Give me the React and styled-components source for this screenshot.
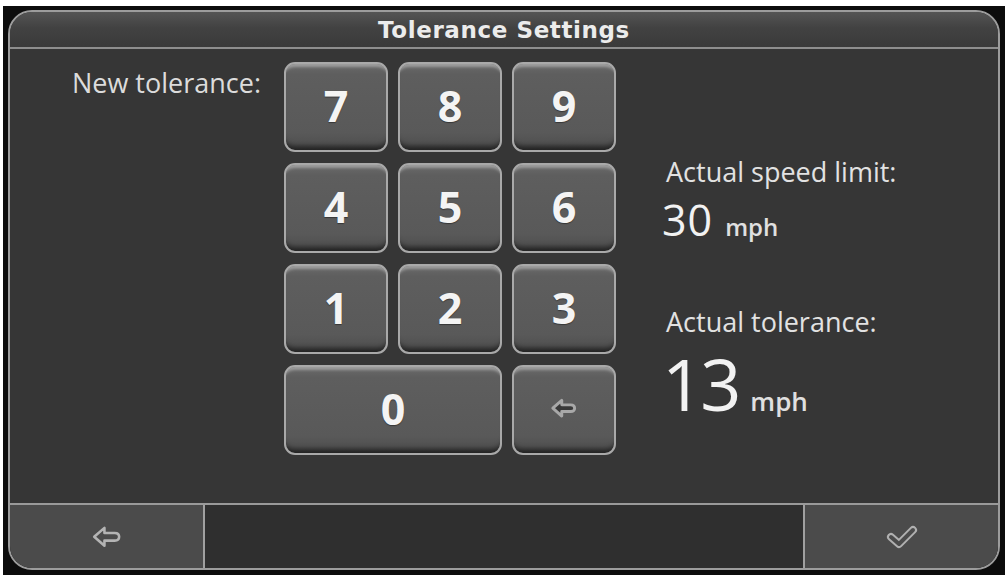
import React from 'react'
import styled, { createGlobalStyle } from 'styled-components'

const GlobalStyle = createGlobalStyle`
  body {
    margin: 0;
    background: #ffffff;
    font-family: 'Open Sans', 'DejaVu Sans', sans-serif;
  }
`

const Frame = styled.div`
  margin: 6px 0 0 3px;
  width: 1002px;
  height: 569px;
  box-sizing: border-box;
  padding: 4px 5px 5px 5px;
  background: #0c0c0c;
`
const Panel = styled.div`
  height: 100%;
  box-sizing: border-box;
  border: 2px solid #9c9c9c;
  border-radius: 24px;
  overflow: hidden;
  display: flex;
  flex-direction: column;
  background: #363636;
`
const TitleBar = styled.header`
  height: 35px;
  flex: none;
  display: flex;
  align-items: center;
  justify-content: center;
  background: linear-gradient(#545454, #424242 45%, #3a3a3a);
  border-bottom: 2px solid #8e8e8e;
  color: #ececec;
  font-family: 'DejaVu Sans', Verdana, sans-serif;
  font-weight: bold;
  font-size: 23px;
  letter-spacing: 0.6px;
`
const Body = styled.main`
  flex: 1;
  display: flex;
  align-items: flex-start;
  padding-top: 13px;
`
const LabelCol = styled.div`
  width: 251px;
  text-align: right;
  padding-top: 3px;
  line-height: 36px;
  color: #dcdcdc;
  font-size: 27px;
  flex: none;
`
const Keypad = styled.div`
  margin-left: 23px;
  display: grid;
  grid-template-columns: repeat(3, 104px);
  grid-auto-rows: 90px;
  gap: 11px 10px;
  flex: none;
`
const Key = styled.button`
  grid-column: span ${(p) => p.span || 1};
  box-sizing: border-box;
  border: 2px solid #a9a9a9;
  border-radius: 11px;
  background: linear-gradient(#6a6a6a 0%, #5e5e5e 12%, #595959 80%, #4c4c4c 100%);
  box-shadow:
    inset 0 -9px 5px -5px rgba(0, 0, 0, 0.55),
    inset 0 7px 3px -4px rgba(255, 255, 255, 0.35);
  color: #f4f4f4;
  font-family: 'Open Sans', 'DejaVu Sans', sans-serif;
  font-weight: 700;
  font-size: 43px;
  line-height: 1;
  text-shadow: 0 1px 1px rgba(0, 0, 0, 0.4);
  display: flex;
  align-items: center;
  justify-content: center;
  padding: 0 0 3px 0;
  cursor: pointer;
`
const Info = styled.section`
  margin-left: 50px;
  padding-top: 93px;
  color: #e2e2e2;
  flex: none;
`
const InfoLabel = styled.div`
  font-size: 27px;
  line-height: 34px;
  margin-top: ${(p) => p.gap || 0}px;
`
const Value = styled.div`
  display: flex;
  align-items: baseline;
  gap: ${(p) => (p.big ? 12 : 12)}px;
  margin-top: ${(p) => (p.big ? 4 : 6)}px;
  margin-left: -4px;
  line-height: ${(p) => (p.big ? 80 : 50)}px;
`
const Num = styled.span`
  font-size: ${(p) => (p.big ? 72 : 43)}px;
  font-weight: 400;
  color: #f2f2f2;
  letter-spacing: ${(p) => (p.big ? -3 : 1)}px;
`
const Unit = styled.span`
  font-size: ${(p) => (p.big ? 26 : 24)}px;
  font-weight: 600;
  color: #e0e0e0;
`
const Footer = styled.footer`
  height: 63px;
  flex: none;
  display: flex;
  border-top: 2px solid #9a9a9a;
  background: #303030;
`
const FootButton = styled.button`
  width: ${(p) => p.w}px;
  flex: none;
  border: none;
  background: #4b4b4b;
  display: flex;
  align-items: center;
  justify-content: center;
  padding: 0;
  cursor: pointer;
`
const Divider = styled.div`
  width: 2px;
  background: #a0a0a0;
  flex: none;
`
const Spacer = styled.div`
  flex: 1;
  background: #2f2f2f;
`

function ArrowIcon({ size = 28, fill = '#4b4b4b', stroke = '#b4b4b4', width = 2 }) {
  return (
    <svg width={size} height={size * 0.8} viewBox="0 0 25 20">
      <path
        d="M2.5 10 L10.5 3 L10.5 7 L18.5 7 Q22 7 22 10 Q22 13 18.5 13 L10.5 13 L10.5 17 Z"
        fill={fill}
        stroke={stroke}
        strokeWidth={width}
        strokeLinejoin="round"
      />
    </svg>
  )
}

function CheckIcon() {
  return (
    <svg width="32" height="26" viewBox="0 0 32 26">
      <path d="M5 13 L13 20 L27 6" fill="none" stroke="#b0b0b0" strokeWidth="8" strokeLinecap="round" strokeLinejoin="round" />
      <path d="M5 13 L13 20 L27 6" fill="none" stroke="#4b4b4b" strokeWidth="4" strokeLinecap="round" strokeLinejoin="round" />
    </svg>
  )
}

const keys = ['7', '8', '9', '4', '5', '6', '1', '2', '3']

export default function App() {
  return (
    <>
      <GlobalStyle />
      <Frame>
        <Panel>
          <TitleBar>Tolerance Settings</TitleBar>
          <Body>
            <LabelCol>New tolerance:</LabelCol>
            <Keypad>
              {keys.map((k) => (
                <Key key={k}>{k}</Key>
              ))}
              <Key span={2}>0</Key>
              <Key>
                <ArrowIcon size={28} fill="#383838" stroke="#a8a8a8" width={2.6} />
              </Key>
            </Keypad>
            <Info>
              <InfoLabel>Actual speed limit:</InfoLabel>
              <Value>
                <Num>30</Num>
                <Unit>mph</Unit>
              </Value>
              <InfoLabel gap={53}>Actual tolerance:</InfoLabel>
              <Value big>
                <Num big>13</Num>
                <Unit big>mph</Unit>
              </Value>
            </Info>
          </Body>
          <Footer>
            <FootButton w={193}>
              <ArrowIcon size={32} />
            </FootButton>
            <Divider />
            <Spacer />
            <Divider />
            <FootButton w={193}>
              <CheckIcon />
            </FootButton>
          </Footer>
        </Panel>
      </Frame>
    </>
  )
}
